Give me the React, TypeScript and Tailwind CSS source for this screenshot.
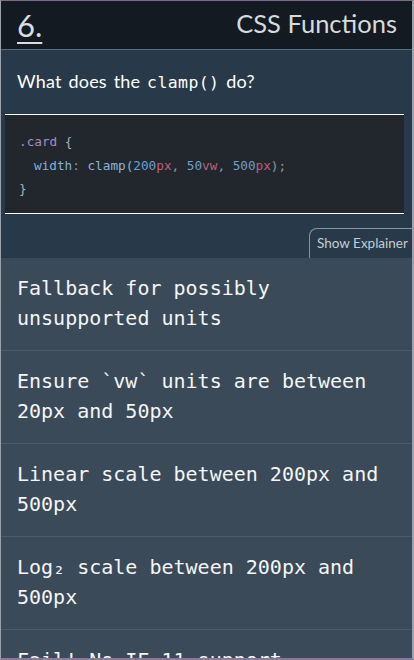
import React from "react";

const answers = [
  "Fallback for possibly unsupported units",
  "Ensure `vw` units are between 20px and 50px",
  "Linear scale between 200px and 500px",
  "Log₂ scale between 200px and 500px",
  "Fail! No IE 11 support",
];

export default function App() {
  const mono = { fontFamily: '"DejaVu Sans Mono", "Liberation Mono", monospace' };
  return (
    <div className="w-[414px] h-[660px] overflow-hidden bg-[#3b4a58] border-t border-t-[#7b6a8c] border-b-2 border-b-[#8a7a9a] border-l border-l-[#9aa3ab] border-r-2 border-r-[#9aa3ab] flex flex-col" style={{ fontFamily: 'Lato, "Open Sans", sans-serif' }}>
      <header className="h-[49px] shrink-0 bg-[#131a21] border-b border-b-[#5d6c79] flex items-center justify-between pl-[16px] pr-[15px]">
        <span className="text-[31px] leading-none text-[#d9dde0] underline decoration-[2px] underline-offset-[5px] pt-[1px]">6.</span>
        <span className="text-[25.5px] leading-none text-[#d6dadd] pb-[2px]">CSS Functions</span>
      </header>
      <section className="shrink-0 bg-[#283a4a] flex flex-col">
        <p className="pl-[16px] pt-[19px] text-[18px] leading-[24px] text-white tracking-[0.2px] [word-spacing:2px]">
          What does the <span style={mono} className="text-[16.5px] tracking-[0.4px]">clamp()</span> do?
        </p>
        <div className="mt-[19px] ml-[4px] mr-[8px] bg-[#22272e] border-t border-b border-white pl-[14px] pt-[15px] pb-[12px] text-[12.7px] leading-[23.5px] text-[#aab2ba]" style={mono}>
          <div>
            <span className="text-[#a78bc0]">.card</span> <span className="text-[#aab2ba]">{"{"}</span>
          </div>
          <div>
            <span className="pl-[15px] text-[#7fb0de]">width</span>
            <span className="text-[#8d97a0]">: </span>
            <span className="text-[#8fb4d6]">clamp(</span>
            <span className="text-[#6f9fd0]">200</span>
            <span className="text-[#c0607a]">px</span>
            <span className="text-[#8d97a0]">, </span>
            <span className="text-[#6f9fd0]">50</span>
            <span className="text-[#c0607a]">vw</span>
            <span className="text-[#8d97a0]">, </span>
            <span className="text-[#6f9fd0]">500</span>
            <span className="text-[#c0607a]">px</span>
            <span className="text-[#8d97a0]">);</span>
          </div>
          <div className="text-[#aab2ba]">{"}"}</div>
        </div>
        <div className="flex justify-end mt-[14px]">
          <div className="w-[103px] h-[30px] border-t border-l border-[#8795a1] rounded-tl-[8px] flex items-center pl-[7px] text-[13.5px] text-[#c3ccd3] whitespace-nowrap">
            Show Explainer
          </div>
        </div>
      </section>
      <div className="flex flex-col">
        {answers.map((a, i) => (
          <div key={i} className="h-[93px] shrink-0 border-b border-b-[#4b5b69] pl-[16px] pr-[20px] pt-[15px] text-[20px] leading-[30px] text-[#f3f5f7]" style={mono}>
            {a}
          </div>
        ))}
      </div>
    </div>
  );
}
